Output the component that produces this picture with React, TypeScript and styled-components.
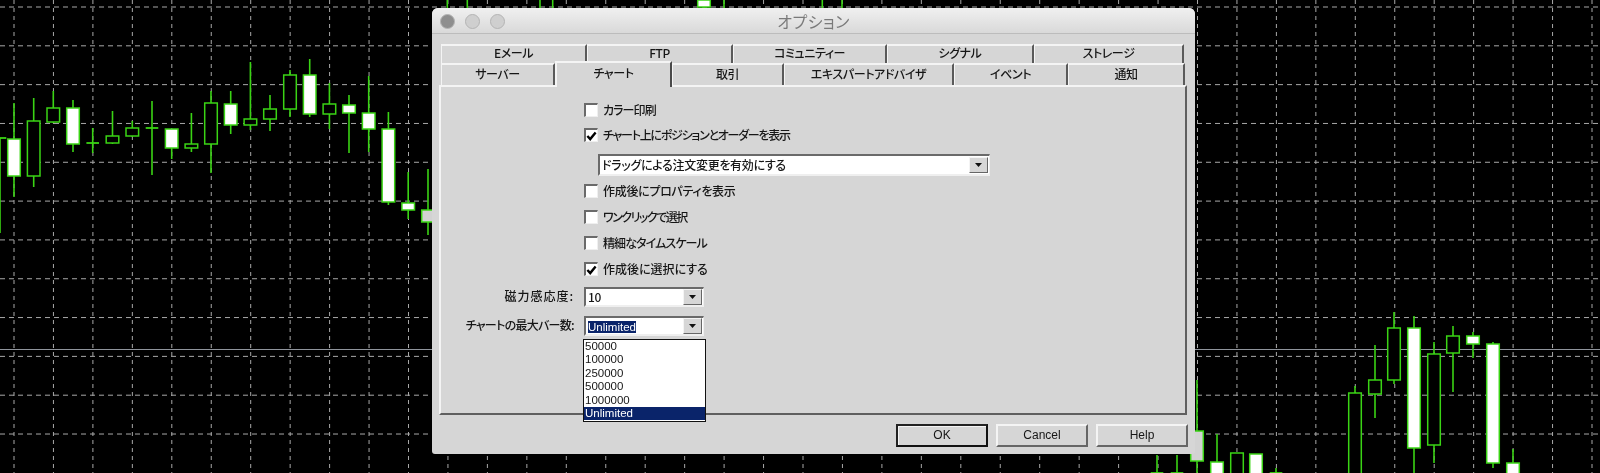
import styled, { createGlobalStyle } from "styled-components";

const GlobalStyle = createGlobalStyle`
  html, body {
    margin: 0;
    background: #000;
    overflow: hidden;
  }
`;

// x, wick top, wick bottom, body top, body bottom, filled
type Candle = [number, number, number, number, number, boolean];

const candles: Candle[] = [
  [0, 138, 233, 138, 138, false],
  [14, 103, 197, 139, 176, true],
  [33.7, 98, 187, 121, 176, false],
  [53.3, 91, 123, 108, 122, false],
  [73, 100, 152, 108, 144, true],
  [92.7, 128, 153, 143, 143, false],
  [112.5, 111, 144, 136, 143, false],
  [132.3, 121, 137, 128, 136, false],
  [152, 101, 175, 128, 128, false],
  [171.7, 129, 159, 129, 148, true],
  [191.4, 113, 152, 144, 148, false],
  [211, 91, 173, 103, 144, false],
  [230.7, 91, 134, 104, 125, true],
  [250.4, 62, 130, 119, 125, false],
  [270, 95, 131, 109, 119, false],
  [290, 70, 117, 75, 109, false],
  [309.7, 59, 117, 75, 114, true],
  [329.4, 83, 129, 104, 114, false],
  [349, 95, 153, 105, 113, true],
  [368.7, 76, 152, 113, 129, true],
  [388.4, 112, 205, 129, 202, true],
  [408.2, 172, 219, 203, 210, true],
  [428, 169, 235, 210, 222, true],
  [447.3, 0, 8, 0, 0, false],
  [467.3, 0, 8, 0, 0, false],
  [540, 0, 8, 0, 0, false],
  [552.7, 0, 8, 0, 0, false],
  [704, 0, 8, 0, 7, true],
  [724, 0, 8, 0, 0, false],
  [822.3, 0, 8, 0, 0, false],
  [842, 0, 8, 0, 0, false],
  [1157, 455, 473, 473, 473, false],
  [1177, 455, 473, 473, 473, false],
  [1197, 380, 473, 431, 461, true],
  [1217, 434, 473, 462, 480, true],
  [1237, 453, 473, 453, 480, false],
  [1256, 454, 473, 454, 480, true],
  [1276, 468, 473, 473, 473, false],
  [1355, 386, 473, 393, 480, false],
  [1375, 345, 418, 380, 394, false],
  [1394, 312, 384, 328, 380, false],
  [1414, 316, 473, 328, 448, true],
  [1434, 342, 463, 354, 445, false],
  [1453, 326, 392, 336, 353, false],
  [1473, 332, 358, 336, 344, true],
  [1493, 342, 468, 344, 463, true],
  [1513, 449, 473, 463, 480, true],
];

const dimmed = [428, 1197];

const verticals = Array.from({ length: 41 }, (_, i) => 14 + i * 39.45);
const horizontals = Array.from({ length: 12 }, (_, i) => 7 + i * 38.82);

function Chart() {
  return (
    <ChartSvg viewBox="0 0 1600 473">
      {verticals.map((x) => (
        <line key={x} x1={x} x2={x} y1={0} y2={473} stroke="#a8a8a8" strokeDasharray="4 4" />
      ))}
      {horizontals.map((y) => (
        <line key={y} x1={0} x2={1600} y1={y} y2={y} stroke="#a8a8a8" strokeDasharray="5 4" />
      ))}
      <line x1={0} x2={1600} y1={349.5} y2={349.5} stroke="#8f949c" />
      {candles.map(([x, top, bottom, bodyTop, bodyBottom, filled]) => (
        <g key={x}>
          <line x1={x} x2={x} y1={top} y2={bottom} stroke="#3ad414" strokeWidth={1.6} />
          {bodyBottom > bodyTop && (
            <rect
              x={x - 6.3}
              y={bodyTop}
              width={12.6}
              height={bodyBottom - bodyTop}
              fill={filled ? (dimmed.includes(x) ? "#d2d2d2" : "#fff") : "#000"}
              stroke="#3ad414"
              strokeWidth={1.5}
            />
          )}
          {bodyBottom === bodyTop && bodyTop > 100 && (
            <line x1={x - 6.3} x2={x + 6.3} y1={bodyTop} y2={bodyTop} stroke="#3ad414" strokeWidth={1.8} />
          )}
        </g>
      ))}
    </ChartSvg>
  );
}

function CheckRow({ label, checked, gap, track }: { label: string; checked?: boolean; gap: number; track: number }) {
  return (
    <Row $gap={gap}>
      <CheckBox>
        {checked && (
          <svg width="12" height="12" viewBox="0 0 12 12">
            <path d="M1.5 6 L4.6 9.4 L10.5 2.2" fill="none" stroke="#000" strokeWidth="2.6" />
          </svg>
        )}
      </CheckBox>
      <Label $track={track}>{label}</Label>
    </Row>
  );
}

function Arrow() {
  return (
    <ArrowButton>
      <svg width="7" height="4" viewBox="0 0 7 4">
        <path d="M0 0 H7 L3.5 4 Z" fill="#111" />
      </svg>
    </ArrowButton>
  );
}

export default function App() {
  return (
    <Page>
      <GlobalStyle />
      <Chart />
      <Dialog>
        <TitleBar>
          <Lights>
            <Light $color="#8e8e8e" />
            <Light $color="#cfcfcf" />
            <Light $color="#cfcfcf" />
          </Lights>
          <Title>オプション</Title>
        </TitleBar>
        <Tabs>
          <TabRow>
            <Tab $w={146}>Eメール</Tab>
            <Tab $w={146}>FTP</Tab>
            <Tab $w={154}>コミュニティー</Tab>
            <Tab $w={147}>シグナル</Tab>
            <Tab $w={150}>ストレージ</Tab>
          </TabRow>
          <TabRow>
            <Tab $w={114}>サーバー</Tab>
            <Tab $w={117} $active>チャート</Tab>
            <Tab $w={112}>取引</Tab>
            <Tab $w={170}>エキスパートアドバイザ</Tab>
            <Tab $w={114}>イベント</Tab>
            <Tab $w={117}>通知</Tab>
          </TabRow>
        </Tabs>
        <Panel>
          <CheckRow label="カラー印刷" gap={0} track={-0.9} />
          <CheckRow label="チャート上にポジションとオーダーを表示" checked gap={5} track={-1.25} />
          <WideCombo>
            <ComboText>ドラッグによる注文変更を有効にする</ComboText>
            <Arrow />
          </WideCombo>
          <CheckRow label="作成後にプロパティを表示" gap={5} track={-0.3} />
          <CheckRow label="ワンクリックで選択" gap={6} track={-1.5} />
          <CheckRow label="精細なタイムスケール" gap={6} track={-0.9} />
          <CheckRow label="作成後に選択にする" checked gap={6} track={0} />
          <FieldRow $gap={8}>
            <FieldLabel $track={1}>磁力感応度:</FieldLabel>
            <Combo>
              <ComboText>10</ComboText>
              <Arrow />
            </Combo>
          </FieldRow>
          <FieldRow $gap={9}>
            <FieldLabel $track={-0.7}>チャートの最大バー数:</FieldLabel>
            <Combo>
              <ComboText>
                <Selected>Unlimited</Selected>
              </ComboText>
              <Arrow />
              <DropList>
                <DropItem>50000</DropItem>
                <DropItem>100000</DropItem>
                <DropItem>250000</DropItem>
                <DropItem>500000</DropItem>
                <DropItem>1000000</DropItem>
                <DropItem $active>Unlimited</DropItem>
              </DropList>
            </Combo>
          </FieldRow>
        </Panel>
        <Footer>
          <Button $default>OK</Button>
          <Button>Cancel</Button>
          <Button>Help</Button>
        </Footer>
      </Dialog>
    </Page>
  );
}

const Page = styled.div`
  position: relative;
  width: 1600px;
  height: 473px;
  overflow: hidden;
  background: #000;
  filter: blur(0.35px);
`;

const ChartSvg = styled.svg`
  display: block;
  width: 1600px;
  height: 473px;
`;

const Dialog = styled.div`
  position: absolute;
  left: 432px;
  top: 8px;
  width: 763px;
  height: 446px;
  box-sizing: border-box;
  display: flex;
  flex-direction: column;
  background: #d6d6d6;
  border-radius: 6px 6px 3px 3px;
  font-family: "Noto Sans CJK JP", "Liberation Sans", sans-serif;
  color: #161616;
`;

const TitleBar = styled.div`
  position: relative;
  box-sizing: border-box;
  height: 26px;
  flex: none;
  display: flex;
  align-items: center;
  justify-content: center;
  background: linear-gradient(180deg, #f0f0f0 0%, #d9d9d9 100%);
  border-bottom: 1px solid #bcbcbc;
  border-radius: 6px 6px 0 0;
`;

const Lights = styled.div`
  position: absolute;
  left: 8px;
  top: 6px;
  display: flex;
  gap: 10px;
`;

const Light = styled.span<{ $color: string }>`
  width: 15px;
  height: 15px;
  border-radius: 50%;
  background: ${(p) => p.$color};
  border: 1px solid #b4b4b4;
  box-sizing: border-box;
`;

const Title = styled.div`
  font-size: 16px;
  letter-spacing: 0.4px;
  color: #7a7a7a;
  font-feature-settings: "palt";
`;

const Tabs = styled.div`
  flex: none;
  padding: 10px 0 0 9px;
`;

const TabRow = styled.div`
  display: flex;
  height: 19px;
  & + & {
    height: 22px;
  }
`;

const Tab = styled.div<{ $w: number; $active?: boolean }>`
  position: relative;
  box-sizing: border-box;
  width: ${(p) => p.$w}px;
  display: flex;
  align-items: center;
  justify-content: center;
  padding-bottom: 4px;
  font-size: 12px;
  font-weight: 500;
  font-feature-settings: "palt";
  letter-spacing: -0.4px;
  background: #d6d6d6;
  border-top: 2px solid #f4f4f4;
  border-left: ${(p) => (p.$active ? "2px solid #f4f4f4" : "1px solid #f4f4f4")};
  border-right: 2px solid ${(p) => (p.$active ? "#4a4a4a" : "#5a5a5a")};
  ${(p) =>
    p.$active &&
    `
    z-index: 2;
    margin-top: -2px;
    margin-bottom: -2px;
    height: 26px;
    padding-bottom: 6px;
  `}
`;

const Panel = styled.div`
  flex: none;
  box-sizing: border-box;
  height: 330px;
  margin: 0 8px 0 7px;
  padding-top: 13px;
  display: flex;
  flex-direction: column;
  border-top: 2px solid #f4f4f4;
  border-left: 2px solid #f4f4f4;
  border-right: 2px solid #5f5f5f;
  border-bottom: 2px solid #5f5f5f;
`;

const Row = styled.div<{ $gap: number }>`
  flex: none;
  height: 20px;
  margin-top: ${(p) => p.$gap}px;
  padding-left: 143px;
  display: flex;
  align-items: center;
  gap: 5px;
`;

const CheckBox = styled.div`
  box-sizing: border-box;
  width: 14px;
  height: 14px;
  display: flex;
  align-items: center;
  justify-content: center;
  background: #fff;
  border-top: 2px solid #6a6a6a;
  border-left: 2px solid #6a6a6a;
  border-right: 1px solid #efefef;
  border-bottom: 1px solid #efefef;
`;

const Label = styled.span<{ $track: number }>`
  font-size: 12px;
  font-weight: 500;
  font-feature-settings: "palt";
  letter-spacing: ${(p) => p.$track}px;
  white-space: nowrap;
  margin-bottom: 1px;
`;

const ComboBase = styled.div`
  position: relative;
  box-sizing: border-box;
  display: flex;
  align-items: center;
  background: #fff;
  border-top: 2px solid #6a6a6a;
  border-left: 2px solid #6a6a6a;
  border-right: 1px solid #efefef;
  border-bottom: 2px solid #efefef;
`;

const WideCombo = styled(ComboBase)`
  flex: none;
  width: 392px;
  height: 22px;
  margin: 9px 0 0 157px;
`;

const Combo = styled(ComboBase)`
  width: 120px;
  height: 20px;
`;

const ComboText = styled.div`
  flex: 1;
  padding-left: 2px;
  font-size: 12px;
  font-weight: 500;
  font-feature-settings: "palt";
  letter-spacing: -0.3px;
  white-space: nowrap;
  margin-bottom: 2px;
`;

const Selected = styled.span`
  background: #0a246a;
  color: #fff;
  font-family: "Liberation Sans", sans-serif;
  font-size: 11.5px;
  letter-spacing: 0;
`;

const ArrowButton = styled.div`
  flex: none;
  box-sizing: border-box;
  width: 19px;
  height: 16px;
  margin-right: 1px;
  display: flex;
  align-items: center;
  justify-content: center;
  background: #d6d6d6;
  border-top: 1px solid #f4f4f4;
  border-left: 1px solid #f4f4f4;
  border-right: 1px solid #666;
  border-bottom: 1px solid #666;
`;

const FieldRow = styled.div<{ $gap: number }>`
  flex: none;
  margin-top: ${(p) => p.$gap}px;
  display: grid;
  grid-template-columns: 133px 120px;
  column-gap: 10px;
  align-items: center;
`;

const FieldLabel = styled.div<{ $track: number }>`
  text-align: right;
  font-size: 12px;
  font-weight: 500;
  font-feature-settings: "palt";
  letter-spacing: ${(p) => p.$track}px;
  white-space: nowrap;
  margin-bottom: 3px;
`;

const DropList = styled.div`
  position: absolute;
  z-index: 3;
  left: -3px;
  top: 21px;
  box-sizing: border-box;
  width: 123px;
  height: 83px;
  background: #fff;
  border: 1px solid #111;
  font-family: "Liberation Sans", sans-serif;
  font-size: 11.5px;
  line-height: 13.4px;
`;

const DropItem = styled.div<{ $active?: boolean }>`
  padding-left: 1px;
  height: 13.4px;
  background: ${(p) => (p.$active ? "#0a246a" : "transparent")};
  color: ${(p) => (p.$active ? "#fff" : "#161616")};
`;

const Footer = styled.div`
  flex: 1;
  display: flex;
  justify-content: flex-end;
  gap: 8px;
  padding: 9px 7px 7px 0;
`;

const Button = styled.div<{ $default?: boolean }>`
  box-sizing: border-box;
  width: 92px;
  height: 23px;
  display: flex;
  align-items: center;
  justify-content: center;
  font-family: "Liberation Sans", sans-serif;
  font-size: 12px;
  padding-bottom: 2px;
  background: #d6d6d6;
  border-top: 2px solid ${(p) => (p.$default ? "#222" : "#f4f4f4")};
  border-left: 2px solid ${(p) => (p.$default ? "#222" : "#f4f4f4")};
  border-right: 2px solid ${(p) => (p.$default ? "#111" : "#666")};
  border-bottom: 2px solid ${(p) => (p.$default ? "#111" : "#666")};
  box-shadow: ${(p) => (p.$default ? "inset 1px 1px 0 #f4f4f4" : "none")};
`;
